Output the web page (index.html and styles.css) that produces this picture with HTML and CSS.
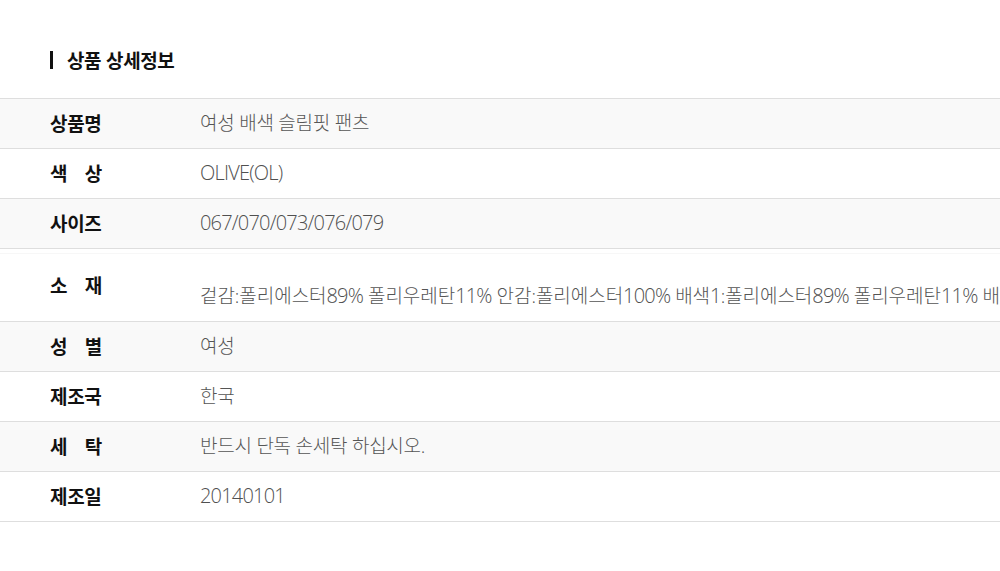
FILE: index.html
```html
<!DOCTYPE html>
<html lang="ko">
<head>
<meta charset="utf-8">
<link rel="stylesheet" href="styles.css">
</head>
<body>
<div class="page">
  <h2 class="title"><span class="bar"></span>상품 상세정보</h2>
  <div class="table">
    <div class="row alt"><div class="label">상품명</div><div class="value">여성 배색 슬림핏 팬츠</div></div>
    <div class="row"><div class="label">색 상</div><div class="value"><span class="num">OLIVE(OL)</span></div></div>
    <div class="row alt"><div class="label">사이즈</div><div class="value"><span class="num">067/070/073/076/079</span></div></div>
    <div class="row tall"><div class="label">소 재</div><div class="value low">겉감:폴리에스터<span class="num">89%</span> 폴리우레탄<span class="num">11%</span> 안감:폴리에스터<span class="num">100%</span> 배색<span class="num">1</span>:폴리에스터<span class="num">89%</span> 폴리우레탄<span class="num">11%</span> 배색<span class="num">2</span>:폴리에스터<span class="num">100%</span></div></div>
    <div class="row alt"><div class="label">성 별</div><div class="value">여성</div></div>
    <div class="row"><div class="label">제조국</div><div class="value">한국</div></div>
    <div class="row alt"><div class="label">세 탁</div><div class="value">반드시 단독 손세탁 하십시오.</div></div>
    <div class="row"><div class="label">제조일</div><div class="value"><span class="num">20140101</span></div></div>
  </div>
</div>
</body>
</html>
```
FILE: styles.css
```css
html, body {
  margin: 0;
  padding: 0;
  background: #fff;
}
body {
  font-family: "Noto Sans CJK KR", "Noto Sans", sans-serif;
  overflow: hidden;
}
.page {
  padding-top: 46px;
  width: 1000px;
}
.title {
  display: flex;
  align-items: center;
  margin: 0 0 24px 50px;
  font-size: 19px;
  font-weight: 700;
  line-height: 28px;
  color: #111;
  letter-spacing: -0.4px;
}
.bar {
  display: inline-block;
  width: 3px;
  height: 18px;
  background: #111;
  margin-right: 14px;
}
.table {
  border-top: 1px solid #dedede;
  width: 1000px;
  overflow: hidden;
}
.row {
  display: flex;
  align-items: center;
  border-bottom: 1px solid #dedede;
  padding: 11px 0 12px;
  background: #fff;
  white-space: nowrap;
}
.row.alt {
  background: #f9f9f9;
}
.row.tall {
  border-top: 1px solid #f7f7f7;
  margin-top: 4px;
  padding-top: 6px;
  padding-bottom: 12px;
}
.label {
  width: 52px;
  margin-left: 50px;
  margin-right: 98px;
  font-size: 19px;
  font-weight: 700;
  line-height: 26px;
  color: #111;
  letter-spacing: -0.3px;
  text-align: justify;
  text-align-last: justify;
  flex-shrink: 0;
}
.value {
  font-family: "Open Sans", "Noto Sans CJK KR", sans-serif;
  font-stretch: 96%;
  font-size: 19px;
  font-weight: 300;
  line-height: 26px;
  height: 26px;
  color: #555;
  letter-spacing: -0.25px;
}
.value.low {
  padding-top: 23px;
  letter-spacing: -0.05px;
}
.num {
  font-size: 20px;
  font-stretch: 96%;
  letter-spacing: -0.8px;
  line-height: 26px;
  color: #505050;
}
```
